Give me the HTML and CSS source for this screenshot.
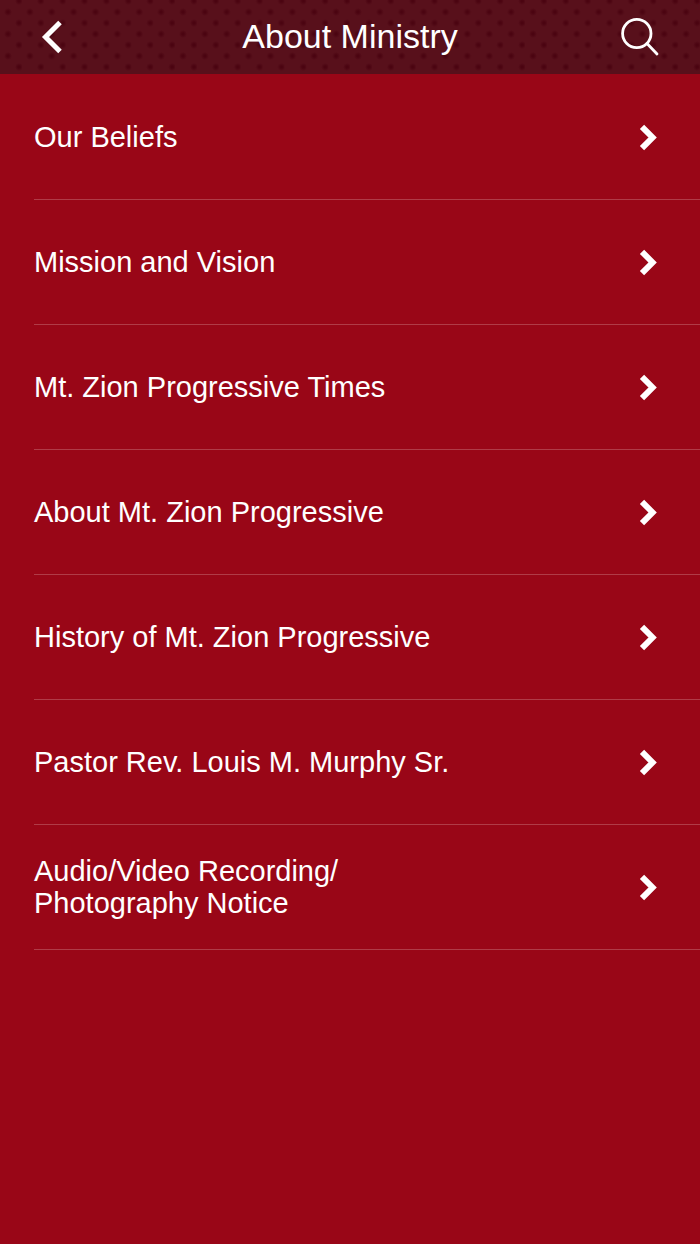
FILE: index.html
```html
<!DOCTYPE html>
<html lang="en">
<head>
<meta charset="utf-8">
<meta name="viewport" content="width=device-width, initial-scale=1">
<title>About Ministry</title>
<link rel="stylesheet" href="styles.css">
</head>
<body>
<header class="bar">
  <button class="bar-button" type="button" aria-label="Back">
    <svg class="back-icon" viewBox="0 0 22 36" aria-hidden="true"><path d="M19 3.5 4.5 18 19 32.5"/></svg>
  </button>
  <h1 class="title">About Ministry</h1>
  <button class="bar-button" type="button" aria-label="Search">
    <svg class="search-icon" viewBox="0 0 40 40" aria-hidden="true"><circle cx="16.8" cy="16.5" r="14.2"/><path d="M27 26.5 37 37"/></svg>
  </button>
</header>
<main>
  <ul class="menu">
    <li class="item"><a class="link" href="#beliefs"><span>Our Beliefs</span><svg class="chevron" viewBox="0 0 18 28" aria-hidden="true"><path d="M3 3.8 13.6 14.5 3 25.2"/></svg></a></li>
    <li class="item"><a class="link" href="#mission"><span>Mission and Vision</span><svg class="chevron" viewBox="0 0 18 28" aria-hidden="true"><path d="M3 3.8 13.6 14.5 3 25.2"/></svg></a></li>
    <li class="item"><a class="link" href="#times"><span>Mt. Zion Progressive Times</span><svg class="chevron" viewBox="0 0 18 28" aria-hidden="true"><path d="M3 3.8 13.6 14.5 3 25.2"/></svg></a></li>
    <li class="item"><a class="link" href="#about"><span>About Mt. Zion Progressive</span><svg class="chevron" viewBox="0 0 18 28" aria-hidden="true"><path d="M3 3.8 13.6 14.5 3 25.2"/></svg></a></li>
    <li class="item"><a class="link" href="#history"><span>History of Mt. Zion Progressive</span><svg class="chevron" viewBox="0 0 18 28" aria-hidden="true"><path d="M3 3.8 13.6 14.5 3 25.2"/></svg></a></li>
    <li class="item"><a class="link" href="#pastor"><span>Pastor Rev. Louis M. Murphy Sr.</span><svg class="chevron" viewBox="0 0 18 28" aria-hidden="true"><path d="M3 3.8 13.6 14.5 3 25.2"/></svg></a></li>
    <li class="item"><a class="link" href="#notice"><span>Audio/Video Recording/<br>Photography Notice</span><svg class="chevron" viewBox="0 0 18 28" aria-hidden="true"><path d="M3 3.8 13.6 14.5 3 25.2"/></svg></a></li>
  </ul>
</main>
</body>
</html>
```
FILE: styles.css
```css
* {
  box-sizing: border-box;
}

body {
  margin: 0;
  min-height: 100vh;
  background: #990617;
  color: #fff;
  font-family: "Liberation Sans", Arial, sans-serif;
}

.bar {
  display: grid;
  grid-template-columns: 104px 1fr 104px;
  align-items: center;
  min-height: 74px;
  background-color: #58101b;
  background-image:
    radial-gradient(circle at 8px 12px, #4b0411 1px, transparent 4px),
    radial-gradient(circle at 19px 1px, #4b0411 1px, transparent 4px),
    radial-gradient(circle at 19px 23px, #4b0411 1px, transparent 4px);
  background-size: 22px 22px;
  background-repeat: round repeat;
}

.bar-button {
  display: flex;
  justify-content: center;
  align-items: center;
  height: 74px;
  padding: 0;
  border: 0;
  background: none;
  color: inherit;
}

.bar-button:last-child {
  justify-content: flex-start;
  padding-left: 24px;
}

.back-icon,
.search-icon,
.chevron {
  flex: none;
  fill: none;
  stroke: currentColor;
}

.back-icon {
  width: 22px;
  height: 36px;
  stroke-width: 5;
}

.search-icon {
  width: 40px;
  height: 40px;
  stroke-width: 2.8;
  stroke-linecap: round;
}

.title {
  margin: 0;
  padding-bottom: 2px;
  font-size: 34px;
  font-weight: 400;
  line-height: 40px;
  text-align: center;
}

.menu {
  margin: 0;
  padding: 1px 0 0 34px;
  list-style: none;
}

.item {
  border-bottom: 1px solid #b03b47;
}

.link {
  display: flex;
  justify-content: space-between;
  align-items: center;
  min-height: 124px;
  padding-right: 43px;
  color: inherit;
  font-size: 29px;
  line-height: 32px;
  text-decoration: none;
}

.chevron {
  width: 18px;
  height: 28px;
  stroke-width: 6;
}
```
